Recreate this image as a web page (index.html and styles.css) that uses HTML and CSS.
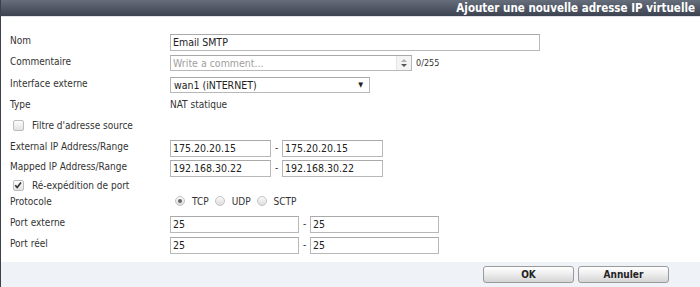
FILE: index.html
```html
<!DOCTYPE html>
<html lang="fr">
<head>
<meta charset="utf-8">
<title>Ajouter une nouvelle adresse IP virtuelle</title>
<link rel="stylesheet" href="styles.css">
</head>
<body>
<div class="dialog">
  <div class="titlebar">Ajouter une nouvelle adresse IP virtuelle</div>
  <div class="form">
    <div class="row r-nom">
      <div class="label">Nom</div>
      <div class="field w-nom">Email SMTP</div>
    </div>
    <div class="row r-comment">
      <div class="label">Commentaire</div>
      <div class="field w-comment placeholder">Write a comment...<span class="spin"><span class="up"></span><span class="down"></span></span></div>
      <span class="count">0/255</span>
    </div>
    <div class="row r-iface">
      <div class="label">Interface externe</div>
      <div class="field w-select">wan1 (iNTERNET)<span class="arrow">▼</span></div>
    </div>
    <div class="row r-type center">
      <div class="label">Type</div>
      <div class="value">NAT statique</div>
    </div>
    <div class="row r-filter center">
      <span class="check"></span><span class="checklabel">Filtre d'adresse source</span>
    </div>
    <div class="row r-ext">
      <div class="label">External IP Address/Range</div>
      <div class="field w-ip">175.20.20.15</div><span class="dash">-</span><div class="field w-ip">175.20.20.15</div>
    </div>
    <div class="row r-mapped">
      <div class="label">Mapped IP Address/Range</div>
      <div class="field w-ip">192.168.30.22</div><span class="dash">-</span><div class="field w-ip">192.168.30.22</div>
    </div>
    <div class="row r-fwd center">
      <span class="check checked"><svg viewBox="0 0 10 10" width="10" height="10"><path d="M2.2 5.2 L4.2 7.4 L8 2.4" fill="none" stroke="#333" stroke-width="1.6"/></svg></span><span class="checklabel">Ré-expédition de port</span>
    </div>
    <div class="row r-proto center">
      <div class="label">Protocole</div>
      <div class="radios">
        <span class="radio on"></span><span class="rlabel">TCP</span>
        <span class="radio"></span><span class="rlabel">UDP</span>
        <span class="radio"></span><span class="rlabel">SCTP</span>
      </div>
    </div>
    <div class="row r-pext">
      <div class="label">Port externe</div>
      <div class="field w-port">25</div><span class="dash">-</span><div class="field w-port">25</div>
    </div>
    <div class="row r-preel">
      <div class="label">Port réel</div>
      <div class="field w-port">25</div><span class="dash">-</span><div class="field w-port">25</div>
    </div>
  </div>
  <div class="footer">
    <button class="btn">OK</button>
    <button class="btn">Annuler</button>
  </div>
</div>
</body>
</html>
```
FILE: styles.css
```css
html, body {
  margin: 0;
  padding: 0;
  background: #fff;
}
body {
  width: 700px;
  height: 287px;
  overflow: hidden;
  font-family: "DejaVu Sans Condensed", "DejaVu Sans", sans-serif;
  font-size: 10px;
  color: #333;
}
.dialog {
  height: 287px;
  border-left: 1px solid #3c414d;
  box-sizing: border-box;
  display: flex;
  flex-direction: column;
}
.titlebar {
  height: 17px;
  background: linear-gradient(#666d7b, #3d4350);
  color: #fff;
  font-weight: bold;
  font-size: 11.5px;
  line-height: 17px;
  text-align: right;
  padding-right: 5px;
  border-bottom: 1px solid #e0e3e8;
  box-sizing: border-box;
}
.form {
  flex: 1;
  padding-left: 9px;
  padding-top: 17px;
}
.row {
  display: flex;
  align-items: flex-start;
}
.row.center { align-items: center; }
.label {
  width: 160px;
  flex: none;
  line-height: 13px;
}
.value { line-height: 13px; }
.field {
  position: relative;
  box-sizing: border-box;
  height: 17px;
  border: 1px solid #b8b8b8;
  border-top-color: #a9a9a9;
  line-height: 15px;
  padding-left: 2px;
  color: #222;
  font-size: 10.5px;
  white-space: nowrap;
}
.placeholder { color: #a0a0a0; }
.w-nom { width: 370px; }
.w-comment { width: 242px; height: 16px; line-height: 14px; }
.w-select { width: 200px; height: 16px; line-height: 14px; padding-left: 3px; }
.w-ip { width: 101px; }
.w-port { width: 129px; }
.dash { width: 11px; text-align: center; line-height: 15px; }

.r-nom { height: 17px; }
.r-comment { height: 16px; margin-top: 4px; }
.r-iface { height: 16px; margin-top: 6px; }
.r-type { height: 22px; }
.r-filter { height: 20px; }
.r-ext { height: 17px; margin-top: 5px; }
.r-mapped { height: 17px; margin-top: 3px; }
.r-fwd { height: 16px; }
.r-proto { height: 16px; }
.r-pext { height: 17px; margin-top: 7px; }
.r-preel { height: 17px; margin-top: 4px; }

.spin {
  position: absolute;
  right: 0;
  top: 0;
  width: 14px;
  height: 14px;
  border-left: 1px solid #e4e4e4;
  background: #f4f4f4;
}
.spin .up, .spin .down {
  position: absolute;
  left: 4px;
  width: 0;
  height: 0;
  border-left: 3px solid transparent;
  border-right: 3px solid transparent;
}
.spin .up { top: 3px; border-bottom: 3px solid #b0b0b0; }
.spin .down { top: 8px; border-top: 3px solid #555; }
.count { margin-left: 4px; font-size: 9px; line-height: 16px; }

.arrow {
  position: absolute;
  right: 6px;
  top: 0;
  font-size: 7px;
  color: #222;
}

.check {
  width: 9px;
  height: 9px;
  border: 1px solid #bdbdbd;
  border-radius: 2px;
  background: linear-gradient(#fdfdfd, #e2e2e2);
  margin-left: 3px;
  margin-right: 8px;
  display: inline-flex;
  flex: none;
}
.check svg { display: block; margin: -1px 0 0 -1px; }
.checklabel { line-height: 13px; }

.radios { display: flex; align-items: center; margin-left: 5px; }
.radio {
  width: 8px;
  height: 8px;
  border: 1px solid #c4c4c4;
  border-radius: 50%;
  background: linear-gradient(#fafafa, #dedede);
  position: relative;
  margin-right: 7px;
}
.radio.on::after {
  content: "";
  position: absolute;
  left: 2px;
  top: 2px;
  width: 4px;
  height: 4px;
  border-radius: 50%;
  background: #666;
}
.rlabel { margin-right: 6px; line-height: 13px; }

.footer {
  height: 25px;
  background: #eff2f7;
  display: flex;
  justify-content: flex-end;
  align-items: flex-start;
  padding-top: 4px;
  padding-right: 31px;
  gap: 4px;
  box-sizing: border-box;
}
.btn {
  width: 91px;
  height: 17px;
  padding: 0;
  border: 1px solid #9a9a9a;
  border-radius: 3px;
  background: linear-gradient(#ffffff 0%, #ececec 50%, #d4d4d4 100%);
  font-family: "DejaVu Sans Condensed", "DejaVu Sans", sans-serif;
  font-weight: bold;
  font-size: 10px;
  color: #222;
  line-height: 15px;
}
```
